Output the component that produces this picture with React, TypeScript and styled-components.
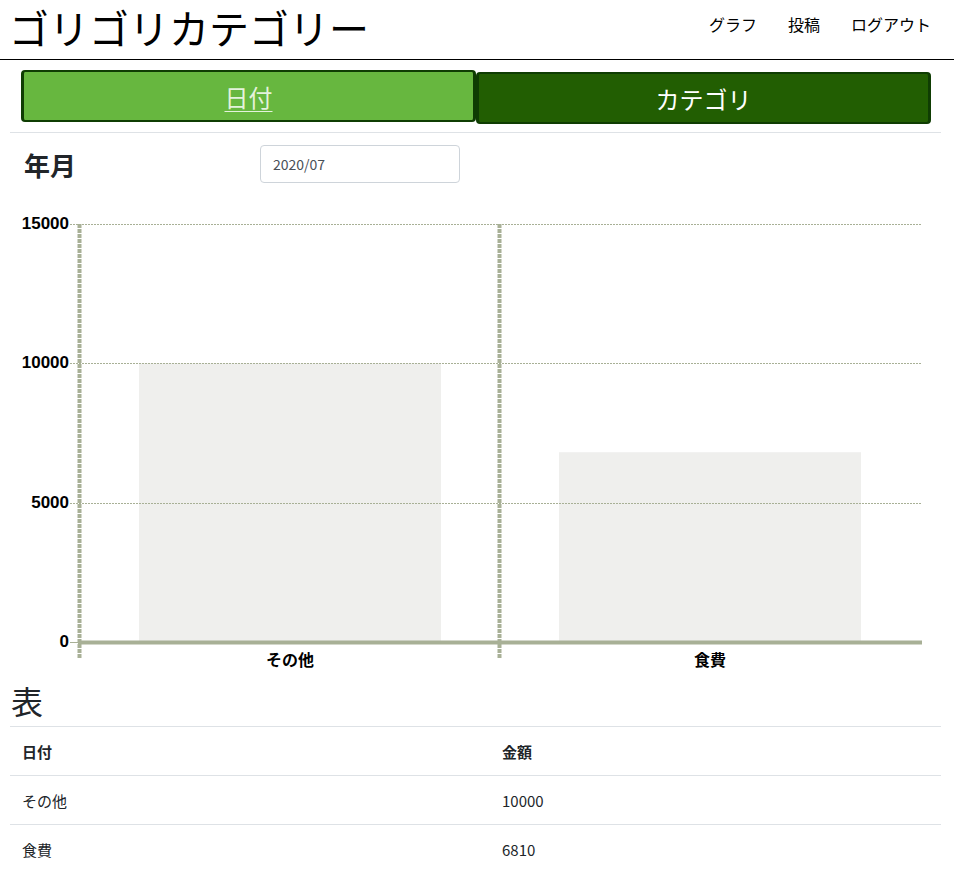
import React from "react";
import styled, { createGlobalStyle } from "styled-components";

const GlobalStyle = createGlobalStyle`
  html, body {
    margin: 0;
    padding: 0;
    background: #ffffff;
    font-family: "Noto Sans CJK JP", "Noto Sans", "Liberation Sans", sans-serif;
    color: #212529;
  }
`;

const Header = styled.header`
  height: 59px;
  border-bottom: 1px solid #000;
  display: flex;
  align-items: flex-start;
  justify-content: space-between;
  padding: 0 23px 0 9px;
`;

const Title = styled.h1`
  margin: 0;
  font-size: 40px;
  font-weight: 400;
  line-height: 54px;
  color: #000;
`;

const Nav = styled.nav`
  display: flex;
  gap: 31px;
  line-height: 48px;
`;

const NavLink = styled.a`
  font-size: 16px;
  color: #000;
  text-decoration: none;
`;

const Main = styled.main`
  width: 931px;
  margin-left: 10px;
`;

const Tabs = styled.div`
  display: flex;
  align-items: flex-start;
  margin: 10px 10px 0 11px;
  height: 62px;
`;

const Tab = styled.button<{ $active?: boolean }>`
  flex: 1;
  height: 52px;
  margin-top: ${(p) => (p.$active ? "0" : "2px")};
  background: ${(p) => (p.$active ? "#67b73f" : "#225e02")};
  border-style: solid;
  border-color: #0f3d03;
  border-width: 2px 3px;
  border-radius: 4px;
  font-family: "Noto Sans CJK JP", sans-serif;
  font-size: 24px;
  color: ${(p) => (p.$active ? "#e4f2dc" : "#ffffff")};
  text-decoration: ${(p) => (p.$active ? "underline" : "none")};
  text-underline-offset: 4px;
  text-decoration-thickness: 1px;
  cursor: pointer;
  padding: 0;
`;

const Divider = styled.hr`
  margin: 0;
  border: 0;
  border-top: 1px solid #dee2e6;
`;

const FilterRow = styled.div`
  display: grid;
  grid-template-columns: 236px 200px;
  align-items: center;
  padding: 12px 0 0 14px;
`;

const FilterLabel = styled.h4`
  margin: 0;
  font-size: 26px;
  font-weight: 700;
  color: #212529;
`;

const MonthInput = styled.input`
  box-sizing: border-box;
  width: 200px;
  height: 38px;
  border: 1px solid #ced4da;
  border-radius: 4px;
  padding: 0 12px;
  font-family: "Noto Sans CJK JP", "Noto Sans", sans-serif;
  font-size: 14px;
  color: #495057;
  outline: none;
`;

const ChartSvg = styled.svg`
  display: block;
  margin-top: 12px;
`;

const SectionTitle = styled.h2`
  margin: 3px 0 6px 1px;
  font-size: 32px;
  font-weight: 400;
  line-height: 40px;
  color: #212529;
`;

const Table = styled.table`
  width: 100%;
  border-collapse: collapse;
  font-size: 15px;
  color: #212529;
`;

const Th = styled.th<{ $w?: number }>`
  text-align: left;
  font-weight: 700;
  height: 48px;
  padding: 0 12px;
  border-top: 1px solid #dee2e6;
  border-bottom: 1px solid #dee2e6;
  width: ${(p) => (p.$w ? `${p.$w - 24}px` : "auto")};
`;

const Td = styled.td`
  height: 48px;
  padding: 0 12px;
  border-top: 1px solid #dee2e6;
`;

const GRID = "rgb(168,176,150)";
const BAR = "#efefed";

const yTicks = [
  { v: 15000, y: 224.5 },
  { v: 10000, y: 363.5 },
  { v: 5000, y: 503.5 },
];

const data = [
  { name: "その他", value: 10000 },
  { name: "食費", value: 6810 },
];

const Chart: React.FC = () => {
  const baseY = 642;
  const topY = 224;
  const scale = (baseY - topY) / 15000;
  return (
    <ChartSvg width={931} height={482} viewBox="10 195 931 482">
      {data.map((d, i) => {
        const h = d.value * scale;
        const x = i === 0 ? 139 : 559;
        return <rect key={d.name} x={x} y={baseY - h} width={302} height={h} fill={BAR} />;
      })}
      {yTicks.map((t) => (
        <line key={t.v} x1={70} x2={922} y1={t.y} y2={t.y} stroke={GRID} strokeWidth={1} strokeDasharray="2 1" />
      ))}
      <line x1={70} x2={80} y1={642.5} y2={642.5} stroke={GRID} strokeWidth={1} />
      {[79.5, 499.5].map((x) => (
        <line key={x} x1={x} x2={x} y1={224} y2={658} stroke={GRID} strokeWidth={4} strokeDasharray="4 1" />
      ))}
      <line x1={78} x2={922} y1={642.5} y2={642.5} stroke={GRID} strokeWidth={4} />
      {[...yTicks, { v: 0, y: 643 }].map((t) => (
        <text
          key={`l${t.v}`}
          x={69}
          y={t.y + 4}
          textAnchor="end"
          fontFamily="'Liberation Sans', Arial, sans-serif"
          fontWeight={700}
          fontSize={17}
          fill="#000"
        >
          {t.v}
        </text>
      ))}
      {data.map((d, i) => (
        <text
          key={`c${d.name}`}
          x={i === 0 ? 290 : 710}
          y={666}
          textAnchor="middle"
          fontFamily="'Noto Sans CJK JP', sans-serif"
          fontWeight={700}
          fontSize={16}
          fill="#000"
        >
          {d.name}
        </text>
      ))}
    </ChartSvg>
  );
};

export default function App() {
  return (
    <>
      <GlobalStyle />
      <Header>
        <Title>ゴリゴリカテゴリー</Title>
        <Nav>
          <NavLink href="#">グラフ</NavLink>
          <NavLink href="#">投稿</NavLink>
          <NavLink href="#">ログアウト</NavLink>
        </Nav>
      </Header>
      <Main>
        <Tabs>
          <Tab $active>日付</Tab>
          <Tab>カテゴリ</Tab>
        </Tabs>
        <Divider />
        <FilterRow>
          <FilterLabel>年月</FilterLabel>
          <MonthInput defaultValue="2020/07" />
        </FilterRow>
        <Chart />
        <SectionTitle>表</SectionTitle>
        <Table>
          <thead>
            <tr>
              <Th $w={480}>日付</Th>
              <Th>金額</Th>
            </tr>
          </thead>
          <tbody>
            {data.map((d) => (
              <tr key={d.name}>
                <Td>{d.name}</Td>
                <Td>{d.value}</Td>
              </tr>
            ))}
          </tbody>
        </Table>
      </Main>
    </>
  );
}
